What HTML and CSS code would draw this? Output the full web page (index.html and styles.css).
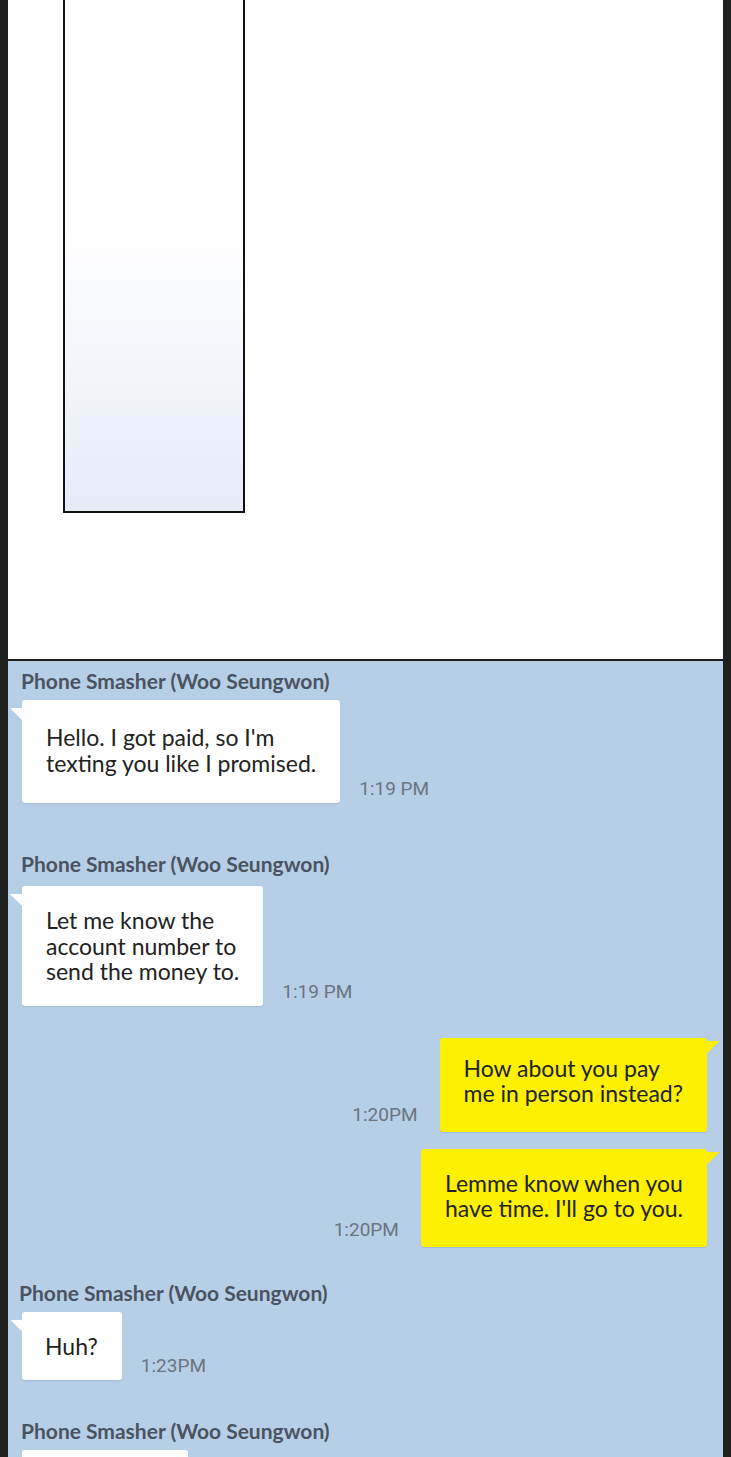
FILE: index.html
```html
<!DOCTYPE html>
<html lang="en">
<head>
    <meta charset="UTF-8">
    <meta name="viewport" content="width=device-width, initial-scale=1.0">
    <title>Phone Smasher</title>
    <link rel="stylesheet" href="styles.css">
</head>
<body>
    <div class="page">
        <div class="panel-top">
            <div class="frame"></div>
        </div>

        <div class="chat">
            <div class="msg">
                <div class="name">Phone Smasher (Woo Seungwon)</div>
                <div class="row">
                    <div class="bubble b1">Hello. I got paid, so I'm<br>texting you like I promised.</div>
                    <span class="time">1:19 PM</span>
                </div>
            </div>

            <div class="msg m2">
                <div class="name">Phone Smasher (Woo Seungwon)</div>
                <div class="row">
                    <div class="bubble b2">Let me know the<br>account number to<br>send the money to.</div>
                    <span class="time">1:19 PM</span>
                </div>
            </div>

            <div class="msg mine m3">
                <div class="row">
                    <span class="time">1:20PM</span>
                    <div class="bubble yellow y1">How about you pay<br>me in person instead?</div>
                </div>
            </div>

            <div class="msg mine m4">
                <div class="row">
                    <span class="time">1:20PM</span>
                    <div class="bubble yellow y2">Lemme know when you<br>have time. I'll go to you.</div>
                </div>
            </div>

            <div class="msg m5">
                <div class="name n3">Phone Smasher (Woo Seungwon)</div>
                <div class="row">
                    <div class="bubble b3">Huh?</div>
                    <span class="time">1:23PM</span>
                </div>
            </div>

            <div class="msg m6">
                <div class="name">Phone Smasher (Woo Seungwon)</div>
                <div class="row">
                    <div class="bubble b4">&nbsp;</div>
                </div>
            </div>
        </div>
    </div>
</body>
</html>
```

FILE: styles.css
```css
body {
    margin: 0;
    background-color: #1f2121;
    font-family: Lato, "Open Sans", sans-serif;
    overflow: hidden;
}
.page {
    margin: 0 8px;
    height: 1457px;
    overflow: hidden;
}
.panel-top {
    background-color: #ffffff;
    height: 659px;
    border-bottom: 2px solid #1c1c1c;
}
.frame {
    width: 178px;
    height: 511px;
    margin-left: 55px;
    border: 2px solid #111111;
    border-top: none;
    background: linear-gradient(to bottom, #ffffff 0%, #ffffff 45%, #e6ebf7 100%);
}
.chat {
    background-color: #b6cfe7;
    padding-top: 7px;
    height: 900px;
}
.name {
    font-size: 21px;
    font-weight: bold;
    color: #4b5360;
    line-height: 26px;
    padding-left: 13px;
}
.name.n3 {
    padding-left: 11px;
}
.row {
    display: flex;
    align-items: flex-end;
    margin-top: 6px;
}
.msg.m2 .row {
    margin-top: 9px;
}
.bubble {
    position: relative;
    background-color: #ffffff;
    color: #222222;
    font-size: 23px;
    line-height: 25.5px;
    padding: 25px 24px 27px;
    margin-left: 14px;
    border-radius: 3px;
    box-shadow: 0 1px 1px rgba(60, 80, 100, 0.15);
}
.bubble::before {
    content: "";
    position: absolute;
    left: -12px;
    top: 8px;
    width: 13px;
    height: 13px;
    background-color: #ffffff;
    clip-path: polygon(0 0, 100% 0, 100% 100%);
}
.bubble.b2 {
    padding: 22px 24px 21px;
}
.bubble.b3 {
    padding: 22px 24px 21px 23px;
}
.bubble.b4 {
    width: 118px;
    height: 40px;
    padding: 0 24px;
}
.time {
    font-family: Roboto, Lato, sans-serif;
    font-size: 19px;
    color: #6c7480;
    margin-left: 19px;
    margin-bottom: 3px;
    white-space: nowrap;
}
.msg.m2 {
    margin-top: 48px;
}
.msg.mine .row {
    justify-content: flex-end;
    margin-top: 0;
}
.msg.mine .time {
    margin-left: 0;
    margin-right: 22px;
    margin-bottom: 6px;
}
.bubble.yellow {
    background-color: #fdf000;
    margin-left: 0;
    margin-right: 16px;
    padding: 18px 24px 25px;
}
.bubble.yellow::before {
    left: auto;
    right: -13px;
    top: 3px;
    background-color: #fdf000;
    clip-path: polygon(0 0, 100% 0, 0 100%);
}
.bubble.y2 {
    padding: 22px 24px 25px;
}
.msg.m3 {
    margin-top: 32px;
}
.msg.m4 {
    margin-top: 17px;
}
.msg.m5 {
    margin-top: 33px;
}
.msg.m6 {
    margin-top: 38px;
}
```
